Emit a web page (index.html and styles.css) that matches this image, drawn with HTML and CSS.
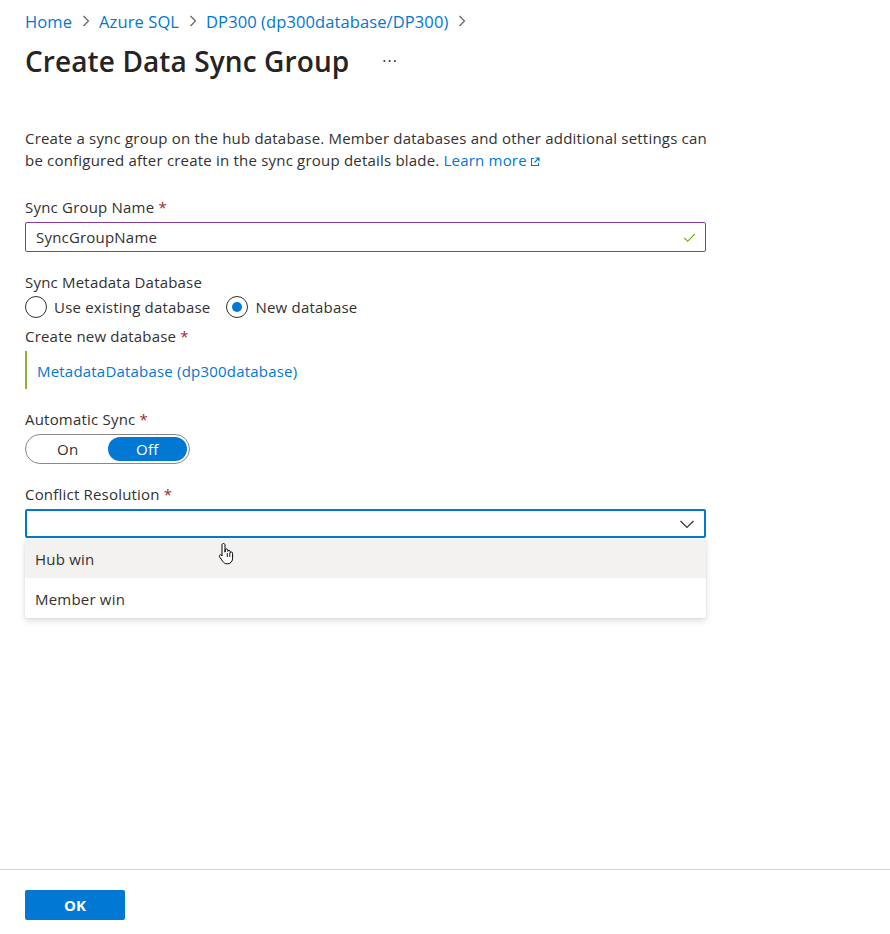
FILE: index.html
```html
<!DOCTYPE html>
<html lang="en">
<head>
<meta charset="utf-8">
<title>Create Data Sync Group</title>
<link rel="stylesheet" href="styles.css">
</head>
<body>
<div class="page">
  <main class="content">
    <nav class="crumbs">
      <a class="crumb">Home</a><svg class="chev" viewBox="0 0 8 12" width="8" height="12"><path d="M1.5 1l5 5-5 5" fill="none" stroke="#605e5c" stroke-width="1.1"/></svg>
      <a class="crumb">Azure SQL</a><svg class="chev" viewBox="0 0 8 12" width="8" height="12"><path d="M1.5 1l5 5-5 5" fill="none" stroke="#605e5c" stroke-width="1.1"/></svg>
      <a class="crumb">DP300 (dp300database/DP300)</a><svg class="chev" viewBox="0 0 8 12" width="8" height="12"><path d="M1.5 1l5 5-5 5" fill="none" stroke="#605e5c" stroke-width="1.1"/></svg>
    </nav>
    <header class="title-row">
      <h1 class="title">Create Data Sync Group</h1>
      <span class="more">&middot;&middot;&middot;</span>
    </header>

    <p class="desc">Create a sync group on the hub database. Member databases and other additional settings can<br>be configured after create in the sync group details blade. <a class="link">Learn more<svg class="ext" viewBox="0 0 10 10" width="10" height="10"><path d="M4 1.5H1.5v7h7V6" fill="none" stroke="currentColor" stroke-width="1.1"/><path d="M5.5 1H9v3.5M9 1L4.5 5.5" fill="none" stroke="currentColor" stroke-width="1.1"/></svg></a></p>

    <section class="field f-name">
      <label class="label">Sync Group Name <span class="req">*</span></label>
      <div class="input valid">
        <span class="input-text">SyncGroupName</span>
        <svg class="check" viewBox="0 0 16 16" width="15" height="15"><path d="M2.5 8.5l3.5 3.5L13.5 4.5" fill="none" stroke="#57a300" stroke-width="1.1"/></svg>
      </div>
    </section>

    <section class="field f-meta">
      <label class="label">Sync Metadata Database</label>
      <div class="radios">
        <span class="radio"><span class="circle"></span>Use existing database</span>
        <span class="radio"><span class="circle on"></span>New database</span>
      </div>
      <label class="label sub">Create new database <span class="req">*</span></label>
      <div class="bar-field"><a class="link">MetadataDatabase (dp300database)</a></div>
    </section>

    <section class="field f-auto">
      <label class="label">Automatic Sync <span class="req">*</span></label>
      <div class="toggle">
        <span class="seg">On</span>
        <span class="seg active">Off</span>
      </div>
    </section>

    <section class="field f-conflict">
      <label class="label">Conflict Resolution <span class="req">*</span></label>
      <div class="select">
        <svg class="chevdown" viewBox="0 0 16 16" width="16" height="16"><path d="M1.5 5l6.5 6.5L14.5 5" fill="none" stroke="#323130" stroke-width="1.2"/></svg>
      </div>
      <ul class="menu">
        <li class="opt hover">Hub win</li>
        <li class="opt last">Member win</li>
      </ul>
      <svg class="cursor" viewBox="0 0 18 24" width="18" height="24"><path d="M5.5 1.5c.9 0 1.5.6 1.5 1.5v7.2l.2-2.3c.2-.8.9-1.1 1.5-1c.7.1 1.1.6 1.1 1.3v1.2c.2-.8.8-1.1 1.4-1c.6.1 1 .6 1 1.3v1.2c.2-.7.8-1 1.4-.9c.6.1 1 .6 1 1.3v5c0 3-2 5.5-5 5.5H9c-2 0-3.2-.9-4.2-2.3L1.6 15c-.5-.8-.3-1.6.3-2c.6-.4 1.4-.2 1.9.4L4 14V3c0-.9.6-1.5 1.5-1.5z" fill="#fff" stroke="#000" stroke-width="1"/><path d="M9.3 11v4M11.8 11v4" stroke="#000" stroke-width="0.9"/></svg>
    </section>
  </main>
  <footer class="footer">
    <button class="ok">OK</button>
  </footer>
</div>
</body>
</html>
```

FILE: styles.css
```css
* { box-sizing: border-box; }
html, body { margin: 0; padding: 0; background: #fff; }
body {
  font-family: "Open Sans", "Noto Sans", sans-serif;
  font-size: 15px;
  letter-spacing: 0.2px;
  color: #323130;
}
.page {
  height: 934px;
  display: flex;
  flex-direction: column;
}
.content {
  flex: 1;
  padding: 10px 0 0 25px;
  width: 681px;
  box-sizing: content-box;
}
.crumbs {
  display: flex;
  align-items: center;
  height: 22px;
  font-size: 16.5px;
  letter-spacing: 0.1px;
}
.crumb { color: #0078d4; }
.chev {
  margin: 0 9px 0 10px;
}
.title-row {
  display: flex;
  align-items: center;
  margin-top: 10px;
  height: 38px;
}
.title {
  margin: 0;
  font-size: 28px;
  font-weight: 600;
  letter-spacing: 0.1px;
  color: #252423;
}
.more {
  margin-left: 33px;
  font-size: 16px;
  letter-spacing: 1px;
  color: #323130;
}
.desc {
  margin: 47px 0 0 0;
  line-height: 22px;
  white-space: nowrap;
}
.link { color: #0078d4; }
.ext { margin-left: 3px; vertical-align: -1px; }
.field { display: flex; flex-direction: column; }
.label { line-height: 22px; }
.req { color: #a4262c; }
.f-name { margin-top: 25px; }
.f-name .label { margin-bottom: 4px; }
.input {
  height: 30px;
  border: 1px solid #8a3c9c;
  border-radius: 2px;
  display: flex;
  align-items: center;
  padding: 0 8px 0 10px;
  justify-content: space-between;
}
.f-meta { margin-top: 19px; }
.radios { display: flex; gap: 16px; height: 28px; align-items: center; }
.radio { display: flex; align-items: center; gap: 7px; }
.circle {
  width: 22px; height: 22px;
  border: 1px solid #323130;
  border-radius: 50%;
  display: inline-block;
  position: relative;
}
.circle.on::after {
  content: "";
  position: absolute;
  left: 5px; top: 5px;
  width: 10px; height: 10px;
  border-radius: 50%;
  background: #0078d4;
}
.sub { margin-top: 4px; }
.bar-field {
  margin-top: 4px;
  border-left: 2px solid #8cb32e;
  height: 38px;
  display: flex;
  align-items: center;
  padding-left: 10px;
  padding-top: 2px;
}
.f-auto { margin-top: 19px; }
.toggle {
  margin-top: 4px;
  width: 165px;
  height: 30px;
  border: 1px solid #8a8886;
  border-radius: 15px;
  display: flex;
  align-items: center;
  padding: 2px;
}
.seg {
  flex: 1;
  height: 24px;
  display: flex;
  align-items: center;
  justify-content: center;
  border-radius: 12px;
}
.seg.active { background: #0078d4; color: #fff; }
.f-conflict { margin-top: 19px; position: relative; }
.select {
  margin-top: 4px;
  height: 29px;
  border: 2px solid #0078d4;
  border-radius: 2px;
  display: flex;
  align-items: center;
  justify-content: flex-end;
  padding-right: 9px;
}
.menu {
  list-style: none;
  margin: 1px 0 0 0;
  padding: 0;
  background: #fff;
  box-shadow: 0 3px 6px rgba(0,0,0,0.13), 0 0 2px rgba(0,0,0,0.1);
  border-radius: 2px;
}
.opt {
  height: 39px;
  display: flex;
  align-items: center;
  padding-left: 10px;
}
.opt.last { height: 40px; padding-top: 2px; }
.opt.hover { background: #f3f2f1; padding-top: 1px; }
.cursor { position: absolute; left: 193px; top: 59px; }
.footer {
  border-top: 1px solid #d8d6d4;
  height: 65px;
  padding: 20px 0 0 25px;
}
.ok {
  width: 100px;
  height: 30px;
  border: 0;
  border-radius: 2px;
  background: #0078d4;
  color: #fff;
  font-family: "Open Sans", sans-serif;
  font-weight: 700;
  font-size: 15px;
}
```
